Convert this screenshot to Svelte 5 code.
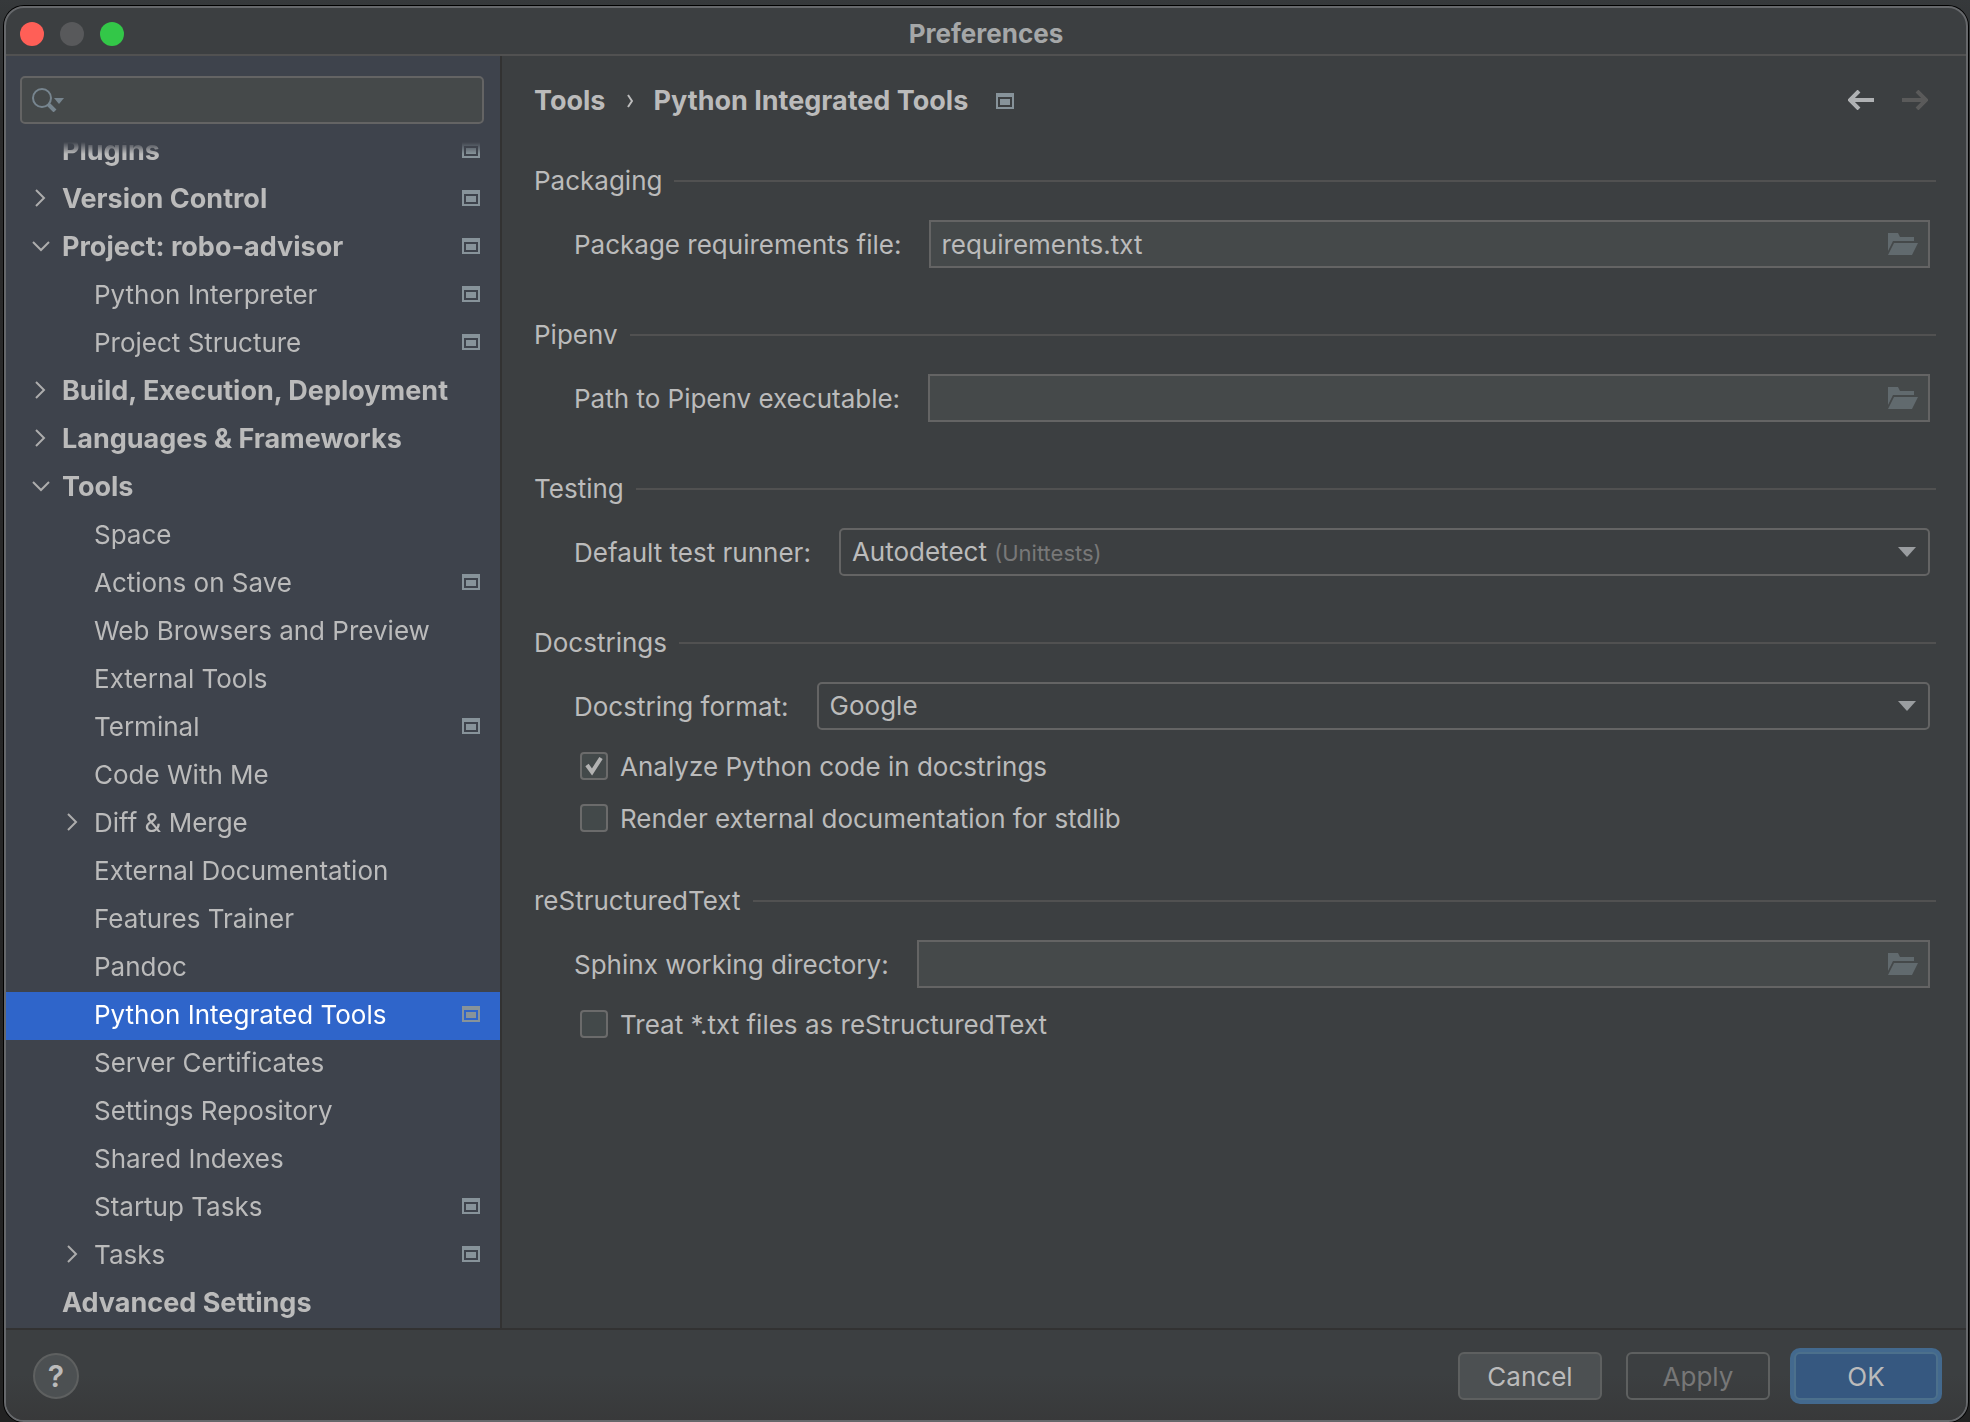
<script lang="ts">
  type Item = {
    label: string;
    level: number;
    bold?: boolean;
    arrow?: 'open' | 'closed';
    project?: boolean;
  };

  // --- settings tree ---
  const items: Item[] = [
    { label: 'Plugins', level: 0, bold: true, project: true },
    { label: 'Version Control', level: 0, bold: true, arrow: 'closed', project: true },
    { label: 'Project: robo-advisor', level: 0, bold: true, arrow: 'open', project: true },
    { label: 'Python Interpreter', level: 1, project: true },
    { label: 'Project Structure', level: 1, project: true },
    { label: 'Build, Execution, Deployment', level: 0, bold: true, arrow: 'closed' },
    { label: 'Languages & Frameworks', level: 0, bold: true, arrow: 'closed' },
    { label: 'Tools', level: 0, bold: true, arrow: 'open' },
    { label: 'Space', level: 1 },
    { label: 'Actions on Save', level: 1, project: true },
    { label: 'Web Browsers and Preview', level: 1 },
    { label: 'External Tools', level: 1 },
    { label: 'Terminal', level: 1, project: true },
    { label: 'Code With Me', level: 1 },
    { label: 'Diff & Merge', level: 1, arrow: 'closed' },
    { label: 'External Documentation', level: 1 },
    { label: 'Features Trainer', level: 1 },
    { label: 'Pandoc', level: 1 },
    { label: 'Python Integrated Tools', level: 1, project: true },
    { label: 'Server Certificates', level: 1 },
    { label: 'Settings Repository', level: 1 },
    { label: 'Shared Indexes', level: 1 },
    { label: 'Startup Tasks', level: 1, project: true },
    { label: 'Tasks', level: 1, arrow: 'closed', project: true },
    { label: 'Advanced Settings', level: 0, bold: true },
  ];

  let selected = $state('Python Integrated Tools');
  let query = $state('');

  // --- form values ---
  let requirements = $state('requirements.txt');
  let pipenv = $state('');
  let runner = $state('auto');
  let format = $state('Google');
  let analyze = $state(true);
  let render = $state(false);
  let sphinx = $state('');
  let treatTxt = $state(false);
</script>

<svelte:head>
  <title>Preferences</title>
</svelte:head>

{#snippet projectIcon()}
  <svg class="project-icon" width="18" height="16" viewBox="0 0 18 16" aria-hidden="true">
    <path fill="#87939a" fill-rule="evenodd" d="M0 0h18v16H0zM2 4v10h14V4z" />
    <path fill="#87939a" d="M4 6h10v6H4z" />
  </svg>
{/snippet}

{#snippet browseButton()}
  <button class="browse" aria-label="Browse">
    <svg width="30" height="22" viewBox="0 0 30 22" aria-hidden="true">
      <path fill="#616a6e" d="M0 0h10l2 4h14v4H5L0 18z" />
      <path fill="#616a6e" d="M6 10h24l-6 12H0z" />
    </svg>
  </button>
{/snippet}

{#snippet comboArrow()}
  <svg class="combo-arrow" width="18" height="10" viewBox="0 0 18 10" aria-hidden="true">
    <path fill="#9a9da0" d="M0 0h18L9 10z" />
  </svg>
{/snippet}

{#snippet tick()}
  <svg class="tick" width="28" height="28" viewBox="0 0 28 28" aria-hidden="true">
    <path d="M7 13l5 7 9-14" fill="none" stroke="#b2b2b2" stroke-width="4" />
  </svg>
{/snippet}

<main class="window">
  <header class="titlebar">
    <div class="lights">
      <button class="light close" aria-label="Close"></button>
      <button class="light minimize" aria-label="Minimize" disabled></button>
      <button class="light zoom" aria-label="Zoom"></button>
    </div>
    <h1>Preferences</h1>
  </header>

  <div class="body">
    <!-- sidebar -->
    <aside class="sidebar">
      <div class="search">
        <svg width="32" height="24" viewBox="0 0 32 24" aria-hidden="true">
          <circle cx="10" cy="10" r="9" fill="none" stroke="#77858f" stroke-width="2" />
          <path d="M16 16l7 7" stroke="#77858f" stroke-width="4" />
          <path d="M22 10h10l-5 6z" fill="#77858f" />
        </svg>
        <input type="text" aria-label="Search settings" bind:value={query} />
      </div>

      <!-- scrolled to the end, so the first row runs under the fade -->
      <nav class="tree">
        <ul>
          {#each items as item}
            <li>
              <button
                class="row"
                class:bold={item.bold}
                class:nested={item.level === 1}
                class:selected={selected === item.label}
                onclick={() => (selected = item.label)}
              >
                <span class="arrow">
                  {#if item.arrow === 'closed'}
                    <svg width="18" height="18" viewBox="0 0 18 18" aria-hidden="true">
                      <path d="M4 1l8 8-8 8" fill="none" stroke="#adadad" stroke-width="2" />
                    </svg>
                  {:else if item.arrow === 'open'}
                    <svg width="18" height="18" viewBox="0 0 18 18" aria-hidden="true">
                      <path d="M1 5l8 8 8-8" fill="none" stroke="#adadad" stroke-width="2" />
                    </svg>
                  {/if}
                </span>
                <span class="label">{item.label}</span>
                {#if item.project}{@render projectIcon()}{/if}
              </button>
            </li>
          {/each}
        </ul>
      </nav>
    </aside>

    <!-- settings page -->
    <section class="page">
      <div class="crumbs">
        <div class="path-names">
          <a href="#tools">Tools</a>
          <svg class="crumb-arrow" width="6" height="14" viewBox="0 0 6 14" aria-hidden="true">
            <path d="M1 1l4 6-4 6" fill="none" stroke="#bbbbbb" stroke-width="2" />
          </svg>
          <h2>Python Integrated Tools</h2>
          {@render projectIcon()}
        </div>
        <div class="history">
          <button aria-label="Back">
            <svg width="26" height="20" viewBox="0 0 26 20" aria-hidden="true">
              <path d="M26 10H3M11 1L2 10l9 9" fill="none" stroke="#afb1b3" stroke-width="4" />
            </svg>
          </button>
          <button aria-label="Forward" disabled>
            <svg width="26" height="20" viewBox="0 0 26 20" aria-hidden="true">
              <path d="M0 10h23M15 1l9 9-9 9" fill="none" stroke="#5a5a5a" stroke-width="4" />
            </svg>
          </button>
        </div>
      </div>

      <fieldset>
        <legend>Packaging</legend>
        <div class="field">
          <label for="requirements">Package requirements file:</label>
          <div class="path">
            <input id="requirements" type="text" bind:value={requirements} />
            {@render browseButton()}
          </div>
        </div>
      </fieldset>

      <fieldset>
        <legend>Pipenv</legend>
        <div class="field">
          <label for="pipenv">Path to Pipenv executable:</label>
          <div class="path">
            <input id="pipenv" type="text" bind:value={pipenv} />
            {@render browseButton()}
          </div>
        </div>
      </fieldset>

      <fieldset>
        <legend>Testing</legend>
        <div class="field">
          <label for="runner">Default test runner:</label>
          <div class="combo">
            <select id="runner" bind:value={runner}>
              <button>
                <selectedcontent></selectedcontent>
              </button>
              <option value="auto">Autodetect <small>(Unittests)</small></option>
            </select>
            {@render comboArrow()}
          </div>
        </div>
      </fieldset>

      <fieldset>
        <legend>Docstrings</legend>
        <div class="field">
          <label for="format">Docstring format:</label>
          <div class="combo">
            <select id="format" bind:value={format}>
              <option>Google</option>
            </select>
            {@render comboArrow()}
          </div>
        </div>
        <label class="check">
          <input type="checkbox" bind:checked={analyze} />
          {@render tick()}
          <span>Analyze Python code in docstrings</span>
        </label>
        <label class="check">
          <input type="checkbox" bind:checked={render} />
          {@render tick()}
          <span>Render external documentation for stdlib</span>
        </label>
      </fieldset>

      <fieldset>
        <legend>reStructuredText</legend>
        <div class="field">
          <label for="sphinx">Sphinx working directory:</label>
          <div class="path">
            <input id="sphinx" type="text" bind:value={sphinx} />
            {@render browseButton()}
          </div>
        </div>
        <label class="check">
          <input type="checkbox" bind:checked={treatTxt} />
          {@render tick()}
          <span>Treat *.txt files as reStructuredText</span>
        </label>
      </fieldset>
    </section>
  </div>

  <footer>
    <button class="help" aria-label="Help">?</button>
    <button class="btn">Cancel</button>
    <button class="btn" disabled>Apply</button>
    <button class="btn primary">OK</button>
  </footer>
</main>

<style>
  :global(body) {
    background: linear-gradient(#36393b, #2b2b2b 120px, #222222);
  }

  .window {
    box-sizing: border-box;
    display: flex;
    flex-direction: column;
    height: calc(100vh - 6px);
    margin: 6px 2px 0 4px;
    border: 2px solid #66686b;
    border-radius: 20px;
    overflow: hidden;
    background: #3c3f41;
    color: #bbbbbb;
    box-shadow: 0 0 0 1px #000;
    font-family: Inter, 'Liberation Sans', sans-serif;
    font-size: 26px;
    line-height: 30px;
  }

  button,
  input,
  select {
    font: inherit;
    color: inherit;
  }

  button {
    padding: 0;
    border: none;
    background: none;
  }

  /* title bar */
  .titlebar {
    display: grid;
    grid-template-columns: 1fr auto 1fr;
    align-items: center;
    height: 40px;
    padding: 6px 14px 0;
    border-bottom: 2px solid #515151;
  }

  .lights {
    display: flex;
    gap: 16px;
  }

  .light {
    width: 24px;
    height: 24px;
    border-radius: 50%;
  }

  .close {
    background: #ff5f57;
  }

  .minimize {
    background: #58595b;
  }

  .zoom {
    background: #33c748;
  }

  h1 {
    margin: 0;
    font-size: 26px;
    font-weight: 700;
    color: #a5a7a8;
  }

  .body {
    display: flex;
    flex: 1;
    min-height: 0;
  }

  /* sidebar */
  .sidebar {
    display: flex;
    flex-direction: column;
    gap: 18px;
    flex: 0 0 494px;
    min-width: 0;
    padding-top: 20px;
    border-right: 2px solid #323232;
    background: #3e434c;
  }

  .search {
    display: flex;
    align-items: center;
    gap: 8px;
    height: 44px;
    margin: 0 16px 0 14px;
    padding: 0 10px;
    border: 2px solid #646464;
    border-radius: 5px;
    background: #45494a;
  }

  .search input {
    flex: 1;
    min-width: 0;
    border: none;
    outline: none;
    background: none;
  }

  .tree {
    display: flex;
    flex-direction: column;
    justify-content: flex-end;
    flex: 1;
    min-height: 0;
    overflow: hidden;
    mask-image: linear-gradient(transparent, #000 12px);
  }

  .tree ul {
    margin: 0;
    padding: 0;
    list-style: none;
  }

  .row {
    display: flex;
    align-items: center;
    width: 100%;
    height: 48px;
    padding: 0 20px 4px 26px;
    text-align: left;
  }

  .row.nested {
    padding-left: 58px;
  }

  .row.bold {
    font-size: 27px;
    font-weight: 700;
  }

  .row.selected {
    background: #2f65ca;
    color: #ffffff;
  }

  .arrow {
    display: flex;
    flex: 0 0 30px;
  }

  .label {
    flex: 1;
    padding-top: 2px;
    white-space: nowrap;
  }

  /* page */
  .page {
    display: flex;
    flex-direction: column;
    gap: 52px;
    flex: 1;
    min-width: 0;
    padding: 30px 30px 0 32px;
  }

  .crumbs {
    display: flex;
    align-items: center;
    justify-content: space-between;
    height: 28px;
  }

  .path-names {
    display: flex;
    align-items: center;
    padding-top: 2px;
    font-size: 27px;
    font-weight: 700;
  }

  .path-names a {
    color: inherit;
    text-decoration: none;
  }

  .crumb-arrow {
    margin: 0 20px 0 22px;
  }

  h2 {
    margin: 0 28px 0 0;
    font-size: 27px;
    font-weight: 700;
  }

  .history {
    display: flex;
    gap: 28px;
    padding-right: 8px;
  }

  .history button {
    display: flex;
  }

  fieldset {
    display: flex;
    flex-direction: column;
    min-width: 0;
    margin: 0;
    padding: 0;
    border: none;
  }

  legend {
    display: flex;
    align-items: center;
    gap: 12px;
    width: 100%;
    margin-bottom: 24px;
    padding: 0;
  }

  legend::after {
    content: '';
    flex: 1;
    height: 2px;
    background: #515151;
  }

  .field {
    display: flex;
    align-items: center;
    gap: 28px;
    padding: 0 6px 0 40px;
  }

  .field label,
  .check span {
    padding-top: 2px;
  }

  .path,
  .combo {
    box-sizing: border-box;
    display: flex;
    align-items: center;
    flex: 1;
    height: 48px;
    border: 2px solid #646464;
  }

  .path {
    background: #45494a;
    padding: 0 10px;
  }

  .path input {
    flex: 1;
    min-width: 0;
    padding: 2px 0 0;
    border: none;
    outline: none;
    background: none;
  }

  .browse {
    display: flex;
  }

  .combo {
    position: relative;
    border-radius: 5px;
  }

  .combo select {
    appearance: base-select;
    flex: 1;
    height: 44px;
    min-width: 0;
    padding: 0 40px 0 11px;
    border: none;
    outline: none;
    background: none;
    line-height: 46px;
  }

  .combo select::picker-icon {
    display: none;
  }

  .combo small {
    font-size: 22px;
    color: #787878;
  }

  .combo-arrow {
    position: absolute;
    right: 12px;
    pointer-events: none;
  }

  .check {
    display: flex;
    align-items: center;
    gap: 12px;
    height: 32px;
    margin-top: 20px;
    padding-left: 46px;
  }

  .check input {
    appearance: none;
    box-sizing: border-box;
    width: 28px;
    height: 28px;
    margin: 0;
    border: 2px solid #6b6b6b;
    border-radius: 4px;
    background: #43494a;
  }

  /* tick is laid over the box */
  .tick {
    margin-left: -40px;
    visibility: hidden;
  }

  .check input:checked + .tick {
    visibility: visible;
  }

  /* footer */
  footer {
    display: flex;
    align-items: center;
    gap: 24px;
    height: 88px;
    padding: 2px 28px 0 27px;
    border-top: 2px solid #323232;
    background: linear-gradient(#3c3f41 50%, #38393a);
  }

  .help {
    width: 46px;
    height: 46px;
    margin-right: auto;
    border: 2px solid #5e6060;
    border-radius: 50%;
    background: #4c5052;
    font-size: 30px;
    font-weight: 600;
  }

  .btn {
    width: 144px;
    height: 48px;
    padding-top: 2px;
    border: 2px solid #5e6060;
    border-radius: 6px;
    background: #4c5052;
  }

  .btn:disabled {
    background: none;
    color: #777777;
  }

  .btn.primary {
    border-color: #4c708c;
    background: #365880;
    box-shadow: 0 0 0 4px #43698e;
  }
</style>
